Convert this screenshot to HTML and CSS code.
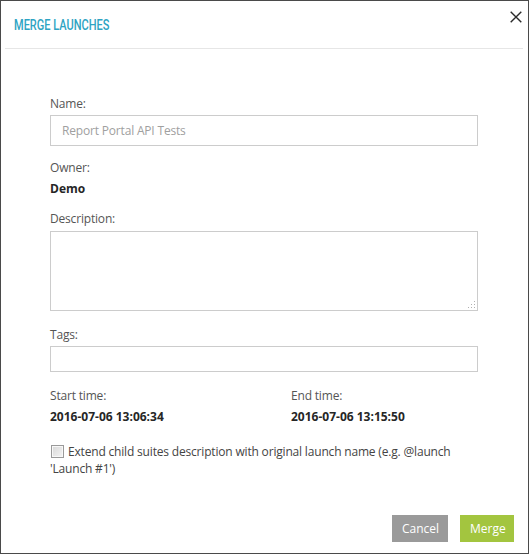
FILE: index.html
```html
<!DOCTYPE html>
<html>
<head>
<meta charset="utf-8">
<title>Merge Launches</title>
<link rel="stylesheet" href="styles.css">
</head>
<body>
<div class="modal">
  <div class="modal-header">
    <h1 class="modal-title">MERGE LAUNCHES</h1>
    <button class="close" aria-label="Close">
      <svg width="12" height="12" viewBox="0 0 12 12"><path d="M0.7 0.7 L11.3 11.3 M11.3 0.7 L0.7 11.3" stroke="#2b2b2b" stroke-width="1.4" fill="none"/></svg>
    </button>
  </div>
  <div class="modal-body">
    <label class="label">Name:</label>
    <input class="input input-name" type="text" placeholder="Report Portal API Tests">
    <div class="label label-owner">Owner:</div>
    <div class="value">Demo</div>
    <label class="label label-desc">Description:</label>
    <div class="textarea-wrap">
      <textarea class="textarea"></textarea>
      <svg class="grip" width="9" height="9" viewBox="0 0 9 9"><g fill="#b0b0b0"><rect x="7" y="1" width="1" height="1"/><rect x="4" y="4" width="1" height="1"/><rect x="7" y="4" width="1" height="1"/><rect x="1" y="7" width="1" height="1"/><rect x="4" y="7" width="1" height="1"/><rect x="7" y="7" width="1" height="1"/></g></svg>
    </div>
    <label class="label label-tags">Tags:</label>
    <input class="input input-tags" type="text">
    <div class="times">
      <div class="time-col">
        <div class="label">Start time:</div>
        <div class="value">2016-07-06 13:06:34</div>
      </div>
      <div class="time-col">
        <div class="label">End time:</div>
        <div class="value">2016-07-06 13:15:50</div>
      </div>
    </div>
    <label class="check-row"><input class="checkbox" type="checkbox">Extend child suites description with original launch name (e.g. @launch 'Launch #1')</label>
  </div>
  <div class="modal-footer">
    <button class="btn btn-cancel">Cancel</button>
    <button class="btn btn-merge">Merge</button>
  </div>
</div>
</body>
</html>
```
FILE: styles.css
```css
* { box-sizing: border-box; }
html, body { margin: 0; padding: 0; background: #fff; }
body {
  font-family: "Open Sans", "DejaVu Sans", sans-serif;
  font-size: 12px;
  line-height: 17px;
  letter-spacing: -0.18px;
  color: #555;
}
.modal {
  width: 529px;
  height: 554px;
  border: 1px solid #4a4a4a;
  display: flex;
  flex-direction: column;
  background: #fff;
}
.modal-header {
  height: 48px;
  margin: 0 5px 0 4px;
  padding: 0 0 0 9px;
  border-bottom: 1px solid #e6e6e6;
  display: flex;
  align-items: center;
  justify-content: space-between;
}
.modal-title {
  margin: 0;
  font-family: "Roboto", "DejaVu Sans Condensed", sans-serif;
  font-weight: 500;
  font-size: 15px;
  letter-spacing: 0;
  color: #2ea4c3;
  white-space: nowrap;
  transform: scaleX(0.735);
  transform-origin: 0 50%;
  position: relative;
  top: 1px;
}
.close {
  border: 0;
  background: none;
  padding: 0;
  width: 12px;
  height: 12px;
  margin-right: 1px;
  align-self: flex-start;
  margin-top: 10px;
  display: flex;
  cursor: pointer;
}
.modal-body {
  flex: 1;
  padding: 46px 50px 0 49px;
  display: flex;
  flex-direction: column;
  align-items: stretch;
}
.label { display: block; color: #555; }
.value { font-weight: bold; color: #262626; margin-top: 4px; letter-spacing: 0; }
.input {
  display: block;
  width: 100%;
  border: 1px solid #cccccc;
  font-family: "Open Sans", sans-serif;
  font-size: 12px;
  letter-spacing: -0.18px;
  padding: 0 11px;
  outline: none;
  color: #555;
  background: #fff;
}
.input::placeholder { color: #a0a0a0; }
.input-name { height: 31px; margin-top: 3px; }
.label-owner { margin-top: 13px; }
.label-desc { margin-top: 13px; }
.textarea-wrap {
  position: relative;
  margin-top: 4px;
  height: 80px;
}
.textarea {
  display: block;
  width: 100%;
  height: 80px;
  border: 1px solid #cccccc;
  resize: none;
  font-family: "Open Sans", sans-serif;
  font-size: 12px;
  outline: none;
}
.grip {
  position: absolute;
  right: 2px;
  bottom: 2px;
}
.label-tags { margin-top: 15px; }
.input-tags { height: 26px; margin-top: 3px; }
.times {
  display: grid;
  grid-template-columns: 241px 1fr;
  margin-top: 15px;
}
.check-row {
  display: block;
  margin-top: 18px;
  color: #444;
}
.checkbox {
  appearance: none;
  -webkit-appearance: none;
  display: inline-block;
  vertical-align: top;
  width: 13px;
  height: 13px;
  margin: 2px 4px 0 1px;
  border: 1px solid #9a9a9a;
  background: linear-gradient(135deg, #d8d8d8 0%, #f4f4f4 100%);
  box-shadow: inset 0 0 0 1px #f8f8f8;
}
.modal-footer {
  display: flex;
  justify-content: flex-end;
  gap: 12px;
  padding: 0 14px 11px 0;
}
.btn {
  border: 0;
  height: 27px;
  padding: 0 10px;
  font-family: "Open Sans", sans-serif;
  font-size: 12px;
  color: #fff;
  cursor: pointer;
}
.btn-cancel { background: #9a9a9a; width: 56px; }
.btn-merge { background: #a3c53f; width: 54px; }
```
